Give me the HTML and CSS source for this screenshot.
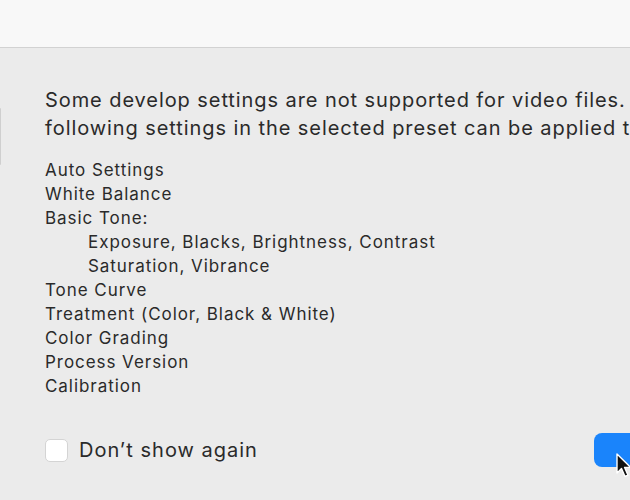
FILE: index.html
```html
<!DOCTYPE html>
<html lang="en">
<head>
    <meta charset="UTF-8">
    <title>Preset Warning</title>
    <link rel="stylesheet" href="styles.css">
</head>
<body>
    <div class="titlebar"></div>

    <div class="dialog">
        <div class="side-edge"></div>

        <div class="content">
            <p class="message">Some develop settings are not supported for video files. The following settings in the selected preset can be applied to videos:</p>

            <ul class="settings">
                <li>Auto Settings</li>
                <li>White Balance</li>
                <li>Basic Tone:</li>
                <li class="sub">Exposure, Blacks, Brightness, Contrast</li>
                <li class="sub">Saturation, Vibrance</li>
                <li>Tone Curve</li>
                <li>Treatment (Color, Black &amp; White)</li>
                <li>Color Grading</li>
                <li>Process Version</li>
                <li>Calibration</li>
            </ul>

            <div class="footer">
                <label class="check">
                    <span class="box"></span>
                    Don’t show again
                </label>
                <button class="primary">
                    <svg class="cursor" width="16" height="26" viewBox="0 0 16 26">
                        <path d="M1 1 L1 20 L5.5 15.5 L9 23.5 L12 22.2 L8.6 14.4 L14.6 14.4 Z" fill="#111" stroke="#fff" stroke-width="1.4" stroke-linejoin="round"/>
                    </svg>
                </button>
            </div>
        </div>
    </div>
</body>
</html>
```

FILE: styles.css
```css
body {
    margin: 0;
    background: #ebebeb;
    font-family: Inter, "Liberation Sans", sans-serif;
    color: #2a2a2a;
    width: 630px;
    height: 500px;
    overflow: hidden;
}
.titlebar {
    height: 47px;
    background: #f8f8f8;
    border-bottom: 1px solid #d2d2d2;
}
.dialog {
    display: flex;
}
.side-edge {
    width: 2px;
    height: 57px;
    margin-top: 60px;
    background: #f6f6f6;
    border-right: 1px solid #cfcfcf;
    border-radius: 0 3px 3px 0;
}
.content {
    margin-left: 44px;
    width: 700px;
    flex-shrink: 0;
}
.message {
    margin: 38px 0 0;
    font-size: 20px;
    line-height: 28px;
    letter-spacing: 0.92px;
    width: 680px;
    height: 56px;
}
.settings {
    list-style: none;
    margin: 16px 0 0;
    padding: 0;
    font-size: 17px;
    line-height: 24px;
    letter-spacing: 0.95px;
}
.settings .sub {
    padding-left: 43px;
}
.footer {
    display: flex;
    align-items: center;
    margin-top: 35px;
    height: 34px;
}
.check {
    display: flex;
    align-items: center;
    gap: 11px;
    font-size: 20px;
    letter-spacing: 1px;
    width: 549px;
}
.box {
    width: 21px;
    height: 21px;
    background: #fff;
    border: 1px solid #d4d4d4;
    border-radius: 5px;
}
.primary {
    position: relative;
    width: 60px;
    height: 34px;
    border: none;
    border-radius: 8px;
    background: #1a84fb;
    padding: 0;
}
.cursor {
    position: absolute;
    left: 22px;
    top: 20px;
}
```
